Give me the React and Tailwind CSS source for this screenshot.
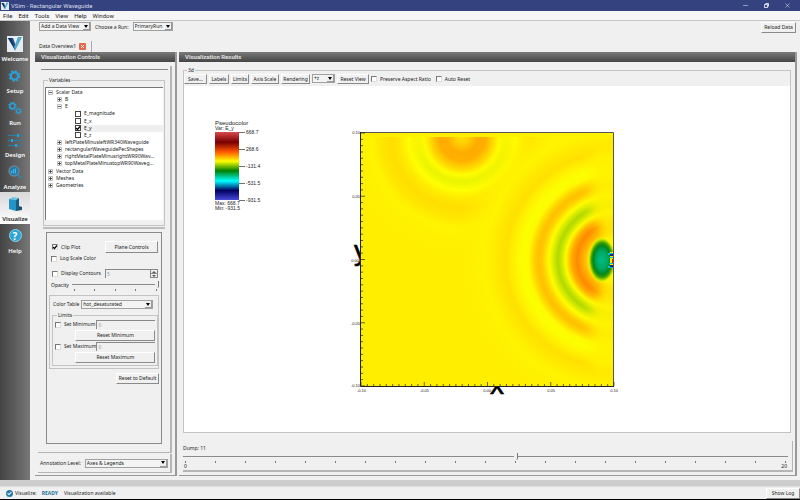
import { useState } from "react";
import { Check as CheckIcon, Minus, X } from "lucide-react";

const treeRows = [
  { label: "Scalar Data", depth: 0, open: true },
  { label: "B", depth: 1 },
  { label: "E", depth: 1, open: true },
  { label: "E_magnitude", depth: 2, check: true },
  { label: "E_x", depth: 2, check: true },
  { label: "E_y", depth: 2, check: true, on: true },
  { label: "E_z", depth: 2, check: true },
  { label: "leftPlateMinusleftWR340Waveguide", depth: 1 },
  { label: "rectangularWaveguidePecShapes", depth: 1 },
  { label: "rightMetalPlateMinusrightWR90Wav...", depth: 1 },
  { label: "topMetalPlateMinustopWR90Waveg...", depth: 1 },
  { label: "Vector Data", depth: 0 },
  { label: "Meshes", depth: 0 },
  { label: "Geometries", depth: 0 },
];

const indents = ["pl-[2px]", "pl-[11px]", "pl-[29px]"];

function VLogo({ className }) {
  return (
    <svg viewBox="0 0 16 16" className={className}>
      <rect width="16" height="16" fill="#e4ecf2" />
      <path d="M1 2h5l3 8-1 4z" fill="#1d4f86" />
      <path d="M15 1h-4L7 11l1 4z" fill="#58a9c9" />
      <path d="M1 2h3l4 12z" fill="#17325e" />
    </svg>
  );
}

function Gear({ cx, cy, r }) {
  const tooth = (2 * Math.PI * r) / 16;
  return (
    <g fill="none" stroke="#2aa0d8">
      <circle cx={cx} cy={cy} r={r * 0.72} strokeWidth={r * 0.42} />
      <circle cx={cx} cy={cy} r={r} strokeWidth={r * 0.36} strokeDasharray={tooth} />
    </g>
  );
}

function SetupIcon() {
  return (
    <svg viewBox="0 0 16 16" className="size-4">
      <Gear cx={7.5} cy={8} r={5} />
    </svg>
  );
}

function RunIcon() {
  return (
    <svg viewBox="0 0 16 16" className="size-4">
      <Gear cx={5.5} cy={6} r={3.6} />
      <Gear cx={11.5} cy={11} r={2.8} />
    </svg>
  );
}

function DesignIcon() {
  return (
    <svg viewBox="0 0 16 16" className="size-4" fill="none" stroke="#2a7fa8">
      <path d="M1 3.500h14M1 8.500h14M1 13.500h14" />
      <path d="M11 2v3M5 7v3M9 12v3" stroke="#2aa0d8" strokeWidth="2" />
    </svg>
  );
}

function AnalyzeIcon() {
  return (
    <svg viewBox="0 0 16 16" className="size-4" fill="none">
      <path d="M10 10l4 4" stroke="#2f86ad" strokeWidth="2.400" />
      <circle cx="7" cy="7" r="5" fill="#1f79a8" stroke="#6b8797" strokeWidth="1.300" />
      <path d="M4.500 9V7M6.500 9.500V5M8.500 9.500V4.500" stroke="#4bb8e4" strokeWidth="1.200" />
    </svg>
  );
}

function CubeIcon() {
  return (
    <svg viewBox="0 0 16 16" className="size-4">
      <path d="M9 9l6 2v3l-6 1z" fill="#24506e" />
      <path d="M2 3l4-2 6 1-3 2z" fill="#6fc6e8" />
      <path d="M2 3l7 1v11l-7-2z" fill="#2494c6" />
      <path d="M9 4l3-2v10l-3 3z" fill="#175d84" />
    </svg>
  );
}

function HelpIcon() {
  return (
    <span className="flex size-[13px] items-center justify-center rounded-full border border-[#8fd3ee] bg-[#2ba3d4] text-[10px] leading-none font-bold text-white">
      ?
    </span>
  );
}

const navItems = [
  { label: "Welcome", icon: <VLogo className="size-4" /> },
  { label: "Setup", icon: <SetupIcon /> },
  { label: "Run", icon: <RunIcon /> },
  { label: "Design", icon: <DesignIcon /> },
  { label: "Analyze", icon: <AnalyzeIcon /> },
  { label: "Visualize", icon: <CubeIcon />, active: true },
  { label: "Help", icon: <HelpIcon /> },
];

function Button({ children, className = "" }) {
  return (
    <button
      className={`border-t border-r border-b border-l border-t-white border-r-[#8a8a8a] border-b-[#8a8a8a] border-l-white bg-[#f0f0f0] text-center whitespace-nowrap ${className}`}
    >
      {children}
    </button>
  );
}

function Select({ value, label, className = "" }) {
  return (
    <span className={`relative block ${className}`}>
      <select
        aria-label={label}
        className="block h-[9px] w-full appearance-none border border-[#a0a0a0] bg-[#f3f3f3] pl-px leading-none"
      >
        <option>{value}</option>
      </select>
      <span className="pointer-events-none absolute top-px right-px flex h-[7px] w-[7px] items-center justify-center border-r border-b border-[#999] bg-[#f0f0f0]">
        <svg viewBox="0 0 4 3" className="h-[3px] w-1">
          <path d="M0 0h4L2 3z" fill="#000" />
        </svg>
      </span>
    </span>
  );
}

function Check({ label, defaultChecked = false, dark = false }) {
  return (
    <label className="flex items-center gap-[3px] whitespace-nowrap">
      <span className="relative block size-[6px] shrink-0">
        <input
          type="checkbox"
          defaultChecked={defaultChecked}
          className={`peer block size-[6px] appearance-none border bg-white ${dark ? "border-[#444]" : "border-t-[#777] border-r-[#ddd] border-b-[#ddd] border-l-[#777]"}`}
        />
        <svg viewBox="0 0 6 6" className="pointer-events-none absolute top-0 left-0 hidden size-[6px] peer-checked:block">
          <path d="M1 3l1.500 1.500L5 1.500" fill="none" stroke="#000" strokeWidth="1.200" />
        </svg>
      </span>
      <span>{label}</span>
    </label>
  );
}

function Slider({ label, max, value, onChange }) {
  return (
    <input
      type="range"
      aria-label={label}
      min="0"
      max={max}
      value={value}
      onChange={(e) => onChange(Number(e.target.value))}
      className="block h-[7px] w-full appearance-none bg-transparent [&::-webkit-slider-runnable-track]:h-px [&::-webkit-slider-runnable-track]:bg-[#8a8a8a] [&::-webkit-slider-thumb]:-mt-[3px] [&::-webkit-slider-thumb]:h-[7px] [&::-webkit-slider-thumb]:w-1 [&::-webkit-slider-thumb]:appearance-none [&::-webkit-slider-thumb]:rounded-b-full [&::-webkit-slider-thumb]:border-r [&::-webkit-slider-thumb]:border-[#777] [&::-webkit-slider-thumb]:bg-[#f0f0f0]"
    />
  );
}

function Ticks({ count }) {
  return (
    <div className="mt-px flex justify-between px-[2px]">
      {Array.from({ length: count }, (_, i) => (
        <span key={i} className="h-[2px] w-px bg-[#777]" />
      ))}
    </div>
  );
}

function PanelHeader({ children }) {
  return (
    <h2 className="h-[10px] shrink-0 bg-linear-to-b from-[#7a7a7a] to-[#454545] pl-[6px] font-[Roboto,sans-serif] text-[6px] leading-[10px] font-semibold text-[#e8e8e8]">
      {children}
    </h2>
  );
}

function TreeRow({ row }) {
  return (
    <li className={`flex h-[7px] items-center gap-[3px] whitespace-nowrap ${indents[row.depth]}`}>
      {row.check ? (
        <span className={row.on ? "flex-1 bg-[#efefef]" : ""}>
          <Check label={row.label} defaultChecked={row.on} dark />
        </span>
      ) : (
        <>
          <svg viewBox="0 0 5 5" className="size-[5px] shrink-0">
            <path d="M.5 .5h4v4h-4z" fill="#fff" stroke="#bbb" />
            <path d={row.open ? "M1 2.500h3" : "M1 2.500h3M2.500 1v3"} stroke="#333" strokeWidth=".8" />
          </svg>
          <span>{row.label}</span>
        </>
      )}
    </li>
  );
}

function LimitRow({ label, reset }) {
  return (
    <>
      <div className="flex items-center justify-between">
        <Check label={label} />
        <input
          aria-label={label + " value"}
          defaultValue="0"
          disabled
          className="h-[9px] w-[59px] border-t border-l border-[#888] bg-[#f0f0f0] pl-px text-[#999]"
        />
      </div>
      <Button className="mt-px mb-px ml-auto block h-[11px] w-[80px]">{reset}</Button>
    </>
  );
}

function Controls() {
  const [opacity, setOpacity] = useState(100);
  return (
    <section className="flex w-[142px] shrink-0 flex-col border-r-2 border-b border-[#999]">
      <PanelHeader>Visualization Controls</PanelHeader>
      <div className="mt-1 mr-[3px] ml-[3px] flex flex-1 flex-col border-r-2 border-b border-[#b5b5b5] pr-[5px] pl-[5px]">
        <hr className="mt-[3px] -ml-[2px] -mr-[3px] border-[#888]" />
        <fieldset className="mt-[7px] border border-[#c4c4c4] px-px pb-[5px]">
          <legend className="ml-[3px] px-px leading-[7px]">Variables</legend>
          <ul className="mt-[3px] flex h-[133px] flex-col border-t border-l border-[#777] bg-white pt-px">
            <li className="contents">
              <ul className="flex h-[100px] flex-col justify-between">
                {treeRows.map((row) => (
                  <TreeRow key={row.label} row={row} />
                ))}
              </ul>
            </li>
          </ul>
        </fieldset>
        <div className="mt-px h-[2px] bg-[#bdbdbd]" />
        <div className="mx-[3px] mt-[3px] mb-2 flex flex-1 flex-col border border-[#8a8a8a] px-[2px] pt-2">
          <div className="flex items-center justify-between pr-px pl-[3px]">
            <Check label="Clip Plot" defaultChecked />
            <Button className="h-[12px] w-[53px]">Plane Controls</Button>
          </div>
          <div className="mt-[2px] pl-[2px]">
            <Check label="Log Scale Color" />
          </div>
          <div className="mt-[7px] flex items-center justify-between pr-px pl-[3px]">
            <Check label="Display Contours" />
            <span className="flex">
              <input
                aria-label="Contour count"
                defaultValue="5"
                disabled
                className="h-[9px] w-[45px] border-t border-l border-[#888] bg-[#f0f0f0] pl-px text-[#999]"
              />
              <span className="flex w-[8px] flex-col border border-[#888]">
                <button aria-label="More contours" className="flex h-1 items-center justify-center border-b border-[#888]">
                  <svg viewBox="0 0 4 2" className="h-[2px] w-1"><path d="M0 2h4L2 0z" fill="#555" /></svg>
                </button>
                <button aria-label="Fewer contours" className="flex h-[3px] items-center justify-center">
                  <svg viewBox="0 0 4 2" className="h-[2px] w-1"><path d="M0 0h4L2 2z" fill="#555" /></svg>
                </button>
              </span>
            </span>
          </div>
          <div className="mt-[3px] flex gap-[3px] pl-[2px]">
            <span className="leading-[9px]">Opacity</span>
            <div className="flex-1">
              <Slider label="Opacity" max={100} value={opacity} onChange={setOpacity} />
              <Ticks count={5} />
            </div>
          </div>
          <div className="mt-1 border border-[#c4c4c4] px-[2px] pt-1 pb-[2px]">
            <div className="flex items-center gap-[2px] pr-[3px] pl-px">
              <span className="whitespace-nowrap">Color Table</span>
              <Select label="Color Table" value="hot_desaturated" className="flex-1" />
            </div>
            <fieldset className="mt-[3px] border border-[#c4c4c4] pt-px pr-[2px] pb-px pl-[2px]">
              <legend className="ml-[2px] px-px leading-[7px]">Limits</legend>
              <LimitRow label="Set Minimum" reset="Reset Minimum" />
              <LimitRow label="Set Maximum" reset="Reset Maximum" />
            </fieldset>
          </div>
          <Button className="mt-1 ml-auto block h-[11px] w-[43px]">Reset to Default</Button>
        </div>
      </div>
      <div className="mx-[3px] mt-px mb-[2px] flex h-[19px] items-center gap-1 border-r-2 border-b border-[#b5b5b5] pr-[2px] pl-[2px]">
        <span className="whitespace-nowrap">Annotation Level:</span>
        <Select label="Annotation Level" value="Axes & Legends" className="flex-1" />
      </div>
    </section>
  );
}

const legendLabels = ["668.7", "268.6", "-131.4", "-531.5", "-931.5"];

function FieldPlot() {
  const minor = Array.from({ length: 41 }, (_, i) => i);
  return (
    <svg viewBox="185 86 604 346" className="h-full w-full" role="img" aria-label="E_y pseudocolor plot">
      <defs>
        <linearGradient id="legend" x1="0" y1="0" x2="0" y2="1">
          <stop offset="0" stopColor="#d84a4a" />
          <stop offset=".15" stopColor="#780000" />
          <stop offset=".29" stopColor="#ff5500" />
          <stop offset=".43" stopColor="#ffff00" />
          <stop offset=".57" stopColor="#008000" />
          <stop offset=".72" stopColor="#00ffff" />
          <stop offset=".86" stopColor="#000060" />
          <stop offset="1" stopColor="#4848dc" />
        </linearGradient>
        <radialGradient id="topWave" gradientUnits="userSpaceOnUse" cx="462" cy="137" r="130">
          <stop offset="0" stopColor="#ffe200" />
          <stop offset=".05" stopColor="#ffd000" />
          <stop offset=".12" stopColor="#ffac00" />
          <stop offset=".18" stopColor="#ffae00" />
          <stop offset=".25" stopColor="#ffdc00" />
          <stop offset=".29" stopColor="#fffc00" />
          <stop offset=".34" stopColor="#eaf400" />
          <stop offset=".37" stopColor="#f0f800" />
          <stop offset=".41" stopColor="#ffff00" />
          <stop offset=".47" stopColor="#ffea00" />
          <stop offset=".54" stopColor="#ffde00" />
          <stop offset=".62" stopColor="#ffe600" />
          <stop offset=".7" stopColor="#fff400" />
          <stop offset=".8" stopColor="#fff000" />
          <stop offset="1" stopColor="#ffee00" stopOpacity="0" />
        </radialGradient>
        <radialGradient id="sideWave" gradientUnits="userSpaceOnUse" cx="613" cy="260" r="160">
          <stop offset="0" stopColor="#ffff00" />
          <stop offset=".14" stopColor="#fff600" />
          <stop offset=".18" stopColor="#ffb400" />
          <stop offset=".225" stopColor="#ff8800" />
          <stop offset=".26" stopColor="#ffae00" />
          <stop offset=".295" stopColor="#fffa00" />
          <stop offset=".325" stopColor="#c8e400" />
          <stop offset=".345" stopColor="#b0d800" />
          <stop offset=".365" stopColor="#cce600" />
          <stop offset=".4" stopColor="#fffc00" />
          <stop offset=".44" stopColor="#ffcc00" />
          <stop offset=".465" stopColor="#ffc000" />
          <stop offset=".49" stopColor="#ffd000" />
          <stop offset=".53" stopColor="#fffa00" />
          <stop offset=".57" stopColor="#faff00" />
          <stop offset=".61" stopColor="#fff400" />
          <stop offset=".67" stopColor="#ffe000" />
          <stop offset=".74" stopColor="#ffea00" />
          <stop offset=".8" stopColor="#fff400" />
          <stop offset="1" stopColor="#ffee00" stopOpacity="0" />
        </radialGradient>
        <radialGradient id="core">
          <stop offset="0" stopColor="#00bd86" />
          <stop offset=".4" stopColor="#00a860" />
          <stop offset=".62" stopColor="#008820" />
          <stop offset=".75" stopColor="#3a9c00" />
          <stop offset=".88" stopColor="#b8dc00" />
          <stop offset="1" stopColor="#ffff00" stopOpacity="0" />
        </radialGradient>
        <filter id="soft" x="-50%" y="-50%" width="200%" height="200%">
          <feGaussianBlur stdDeviation="6" />
        </filter>
        <clipPath id="frame">
          <rect x="361" y="133" width="253" height="253" />
        </clipPath>
      </defs>

      <g fontFamily="Liberation Sans" fontSize="5" fill="#222">
        <text x="215" y="125" fontSize="6">Pseudocolor</text>
        <text x="215" y="130">Var: E_y</text>
        <rect x="215" y="132" width="24" height="68" fill="url(#legend)" />
        {legendLabels.map((label, i) => (
          <g key={label}>
            <path d={`M239 ${132.5 + i * 17}h6`} stroke="#333" strokeWidth=".7" />
            <text x="246" y={134 + i * 17}>{label}</text>
          </g>
        ))}
        <text x="215" y="205">Max:  668.7</text>
        <text x="215" y="210">Min: -931.5</text>
      </g>

      {/* axis letters sit partly behind the plot area */}
      <g fontFamily="Liberation Sans" fontSize="28" fill="#000" stroke="#000" strokeWidth=".6">
        <text x="354" y="260">y</text>
        <text x="490" y="394">x</text>
      </g>

      <g clipPath="url(#frame)">
        <rect x="361" y="133" width="253" height="253" fill="#ffee00" />
        <rect x="361" y="137" width="253" height="249" fill="url(#topWave)" />
        <g filter="url(#soft)" fill="#fff600">
          <ellipse cx="417" cy="143" rx="7" ry="18" opacity=".8" />
          <ellipse cx="507" cy="143" rx="7" ry="18" opacity=".8" />
        </g>
        <rect x="361" y="133" width="253" height="253" fill="url(#sideWave)" />
        <g filter="url(#soft)" fill="#fff200">
          <path d="M620 242l-16-4-14-30 4-60h30z" opacity=".9" />
          <path d="M620 278l-16 4-14 30 4 60h30z" opacity=".9" />
        </g>
        <ellipse cx="602" cy="260" rx="14" ry="23" fill="url(#core)" />
        <path d="M610 252h4v16h-4z" fill="#ffee00" />
        <path d="M608 253h6v2h-6zM608 266h6v2h-6z" fill="#00b8d8" />
        <path d="M610 254h4v2h-4zM610 265h4v2h-4z" fill="#102080" />
        <path d="M609 257h4v1h-4zM609 263h4v1h-4z" fill="#00c8c0" />
        <path d="M612 259h2v4h-2z" fill="#e02000" />
      </g>

      <g stroke="#222" strokeWidth="1" fill="none">
        <path d="M360.500 132.500H613.500V386" stroke="#555" />
        <path d="M360.500 132V386.500H614" />
        {minor.map((i) => (
          <path
            key={i}
            d={`M361 ${133 + i * 6.325}h${i % 10 === 0 ? 4 : 2}M${361 + i * 6.325} 386v${i % 10 === 0 ? -4 : -2}`}
            strokeWidth=".7"
          />
        ))}
      </g>
      <g fontFamily="Liberation Sans" fontSize="4" fill="#222" textAnchor="end">
        <text x="360" y="134">0.10</text>
        <text x="360" y="198">0.05</text>
        <text x="359" y="262">0.00</text>
        <text x="360" y="325">-0.05</text>
        <text x="360" y="387">-0.10</text>
        <text x="366" y="392">-0.10</text>
        <text x="429" y="392">-0.05</text>
        <text x="491" y="392">0.00</text>
        <text x="555" y="392">0.05</text>
        <text x="618" y="392">0.10</text>
      </g>
    </svg>
  );
}

function Results() {
  const [dump, setDump] = useState(11);
  return (
    <section className="flex min-w-0 flex-1 flex-col border-r-2 border-b border-[#999]">
      <PanelHeader>Visualization Results</PanelHeader>
      <fieldset className="mx-1 mt-1 flex min-h-0 min-w-0 flex-1 flex-col border border-[#c4c4c4]">
        <legend className="ml-[3px] px-px leading-[8px]">3d</legend>
        <div className="flex h-[12px] shrink-0 items-start gap-[2px]">
          <Button className="h-[10px] w-[23px]">Save...</Button>
          <Button className="h-[10px] w-[20px]">Labels</Button>
          <Button className="h-[10px] w-[18px]">Limits</Button>
          <Button className="h-[10px] w-[28px]">Axis Scale</Button>
          <Button className="h-[10px] w-[29px]">Rendering</Button>
          <Select label="View direction" value="+z" className="w-[23px]" />
          <Button className="h-[10px] w-[32px]">Reset View</Button>
          <div className="flex h-[10px] items-center gap-[5px]">
            <Check label="Preserve Aspect Ratio" />
            <Check label="Auto Reset" />
          </div>
        </div>
        <div className="min-h-0 flex-1 bg-white">
          <FieldPlot />
        </div>
      </fieldset>
      <div className="mr-[2px] ml-1 mt-2 mb-[3px] border-r border-b-2 border-[#b5b5b5] pt-[3px] pr-1">
        <div className="mb-px leading-[8px]">Dump: {dump}</div>
        <Slider label="Dump" max={20} value={dump} onChange={setDump} />
        <Ticks count={21} />
        <div className="flex justify-between px-px pb-px leading-[6px]">
          <span>0</span>
          <span>20</span>
        </div>
      </div>
    </section>
  );
}

export default function App() {
  return (
    <div className="flex h-screen flex-col overflow-hidden bg-[#f0f0f0] font-['Noto_Sans',sans-serif] text-[5px] leading-[7px] text-[#222]">
      <header className="flex h-[11px] shrink-0 items-center bg-[#34437f] font-[Roboto,sans-serif] text-[6px] text-[#d8dcec]">
        <VLogo className="ml-px size-2" />
        <h1 className="ml-[2px]">VSim - Rectangular Waveguide</h1>
        <div className="ml-auto flex items-center gap-[14px] pr-[9px]">
          <button aria-label="Minimize"><Minus className="size-[7px]" /></button>
          <button aria-label="Restore">
            <svg viewBox="0 0 7 7" className="size-[7px]" fill="none" stroke="#d8dcec"><path d="M1.500 2.500h3v3h-3zM2.500 1.500h3v3" /></svg>
          </button>
          <button aria-label="Close"><X className="size-[7px]" /></button>
        </div>
      </header>
      <nav className="flex h-[10px] shrink-0 items-center gap-[6px] border-b border-[#c8c8c8] bg-[#f6f6f6] pl-[3px] font-[Roboto,sans-serif] text-[6px]">
        {["File", "Edit", "Tools", "View", "Help", "Window"].map((item) => (
          <button key={item}>{item}</button>
        ))}
      </nav>

      <div className="flex min-h-0 flex-1">
        <nav className="w-[30px] shrink-0 bg-linear-to-r from-[#444] to-[#777] pt-[11px]">
          {navItems.map((item) => (
            <button
              key={item.label}
              className={`flex h-8 w-full flex-col items-center overflow-hidden whitespace-nowrap ${item.active ? "bg-linear-to-b from-[#d8d8d8] to-white text-[#222]" : "text-white"}`}
            >
              <span className="flex h-[23px] items-center justify-center">{item.icon}</span>
              <span className="text-[6px] leading-[9px] font-semibold">{item.label}</span>
            </button>
          ))}
        </nav>
        <main className="flex min-w-0 flex-1 flex-col pl-[5px]">
          <div className="flex h-[20px] shrink-0 items-start gap-1 pt-px pl-1">
            <Select label="Data view" value="Add a Data View" className="w-[52px]" />
            <span className="leading-[10px]">Choose a Run:</span>
            <Select label="Run" value="PrimaryRun" className="w-[40px]" />
            <Button className="mr-1 ml-auto h-[11px] w-[35px]">Reload Data</Button>
          </div>
          <div className="flex h-[11px] w-[57px] shrink-0 items-center gap-[3px] border-r border-[#aaa] pl-1">
            <span className="whitespace-nowrap">Data Overview1</span>
            <button aria-label="Close tab" className="flex size-[7px] items-center justify-center rounded-[1px] bg-[#e2694a] text-white">
              <X className="size-[5px]" strokeWidth={4} />
            </button>
          </div>
          <div className="mr-[3px] mb-1 flex min-h-0 flex-1 gap-[2px]">
            <Controls />
            <Results />
          </div>
        </main>
      </div>

      <div className="h-[6px] shrink-0 bg-[#cdcdcd]" />
      <footer className="flex h-[14px] shrink-0 items-center border-t border-b border-t-[#ddd] border-b-black pl-[6px]">
        <span className="flex size-[7px] items-center justify-center rounded-full bg-[#2a7ba8] text-white">
          <CheckIcon className="size-[5px]" strokeWidth={5} />
        </span>
        <span className="ml-[2px]">Visualize:</span>
        <span className="ml-[5px] font-bold text-[#22709c]">READY</span>
        <span className="ml-[6px]">Visualization available</span>
        <Button className="ml-auto h-[11px] w-[34px]">Show Log</Button>
      </footer>
    </div>
  );
}
